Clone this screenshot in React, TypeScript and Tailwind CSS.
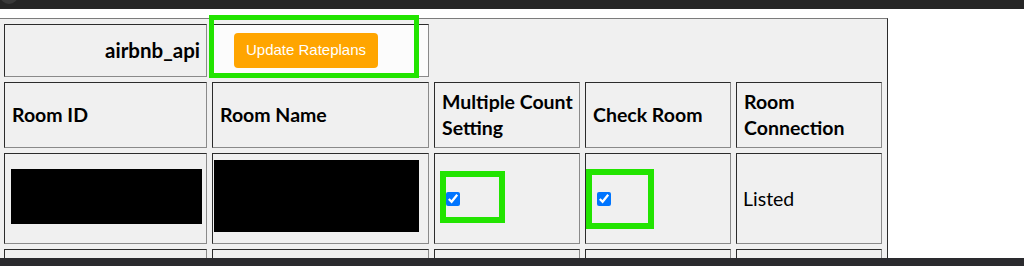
const cellBase =
  "border border-t-[#2b2b2b] border-l-[#2b2b2b] border-r-[#8a8a8a] border-b-[#8a8a8a] bg-[#f0f0f0]";

const headers = ["Room ID", "Room Name", "Multiple Count Setting", "Check Room", "Room Connection"];

function Checkbox() {
  return <input type="checkbox" defaultChecked className="m-0 h-[14px] w-[14px] accent-[#0075ff]" />;
}

export default function App() {
  return (
    <div className="relative h-[266px] w-[1024px] overflow-hidden bg-white font-['Lato',sans-serif] text-black">
      {/* window chrome */}
      <div className="relative h-[9px] overflow-hidden bg-[#262626]">
        <div className="absolute -top-[14px] left-0 h-[18px] w-[18px] rounded-full bg-[#3a3a3a]" />
      </div>

      <div className="mt-[9px] -ml-[2px] w-[890px] border border-t-[#7c7c7c] border-l-[#7c7c7c] border-r-[#2b2b2b] border-b-[#2b2b2b] bg-[#f0f0f0] p-[5px]">
        <div className="grid grid-cols-[203px_217px_146px_146px_146px] grid-rows-[53px_66px_91px_91px] gap-[5px]">
          <div className={`${cellBase} flex items-center justify-end pr-[6px] text-[20.5px] font-bold`}>
            airbnb_api
          </div>
          <div className="flex items-center border border-t-[#2b2b2b] border-l-[#2b2b2b] border-r-[#8a8a8a] border-b-[#8a8a8a] bg-[#fcfcfc] pb-[1px] pl-[21px]">
            <button
              type="button"
              className="mt-[1px] h-[35px] w-[144px] rounded-[4px] bg-[#ffa500] font-['Liberation_Sans',Arial,sans-serif] text-[15px] text-white">
              Update Rateplans
            </button>
          </div>
          <div className="col-span-3" />

          {headers.map((h) => (
            <div key={h} className={`${cellBase} flex items-center pl-[7px] pr-[4px] text-[19.5px] font-bold leading-[26px]`}>
              {h}
            </div>
          ))}

          <div className={`${cellBase} flex items-start pt-[15px] pl-[6px]`}>
            <div className="h-[55px] w-[191px] bg-black" />
          </div>
          <div className={`${cellBase} flex items-start pt-[6px] pl-[1px]`}>
            <div className="h-[72px] w-[205px] bg-black" />
          </div>
          <div className={`${cellBase} flex items-center pl-[11px]`}>
            <Checkbox />
          </div>
          <div className={`${cellBase} flex items-center pl-[11px]`}>
            <Checkbox />
          </div>
          <div className={`${cellBase} flex items-center pl-[6px] text-[19.5px]`}>Listed</div>

          <div className={cellBase} />
          <div className={cellBase} />
          <div className={cellBase} />
          <div className={cellBase} />
          <div className={cellBase} />
        </div>
      </div>

      {/* annotation boxes */}
      <div className="absolute left-[209px] top-[15px] h-[63px] w-[210px] border-[5px] border-[#22e400]" />
      <div className="absolute left-[440px] top-[171px] h-[52px] w-[65px] border-[6px] border-[#22e400]" />
      <div className="absolute left-[586px] top-[169px] h-[60px] w-[68px] border-[6px] border-[#22e400]" />

      <div className="absolute bottom-0 left-0 h-[8px] w-full bg-[#2a2a2e]" />
    </div>
  );
}
